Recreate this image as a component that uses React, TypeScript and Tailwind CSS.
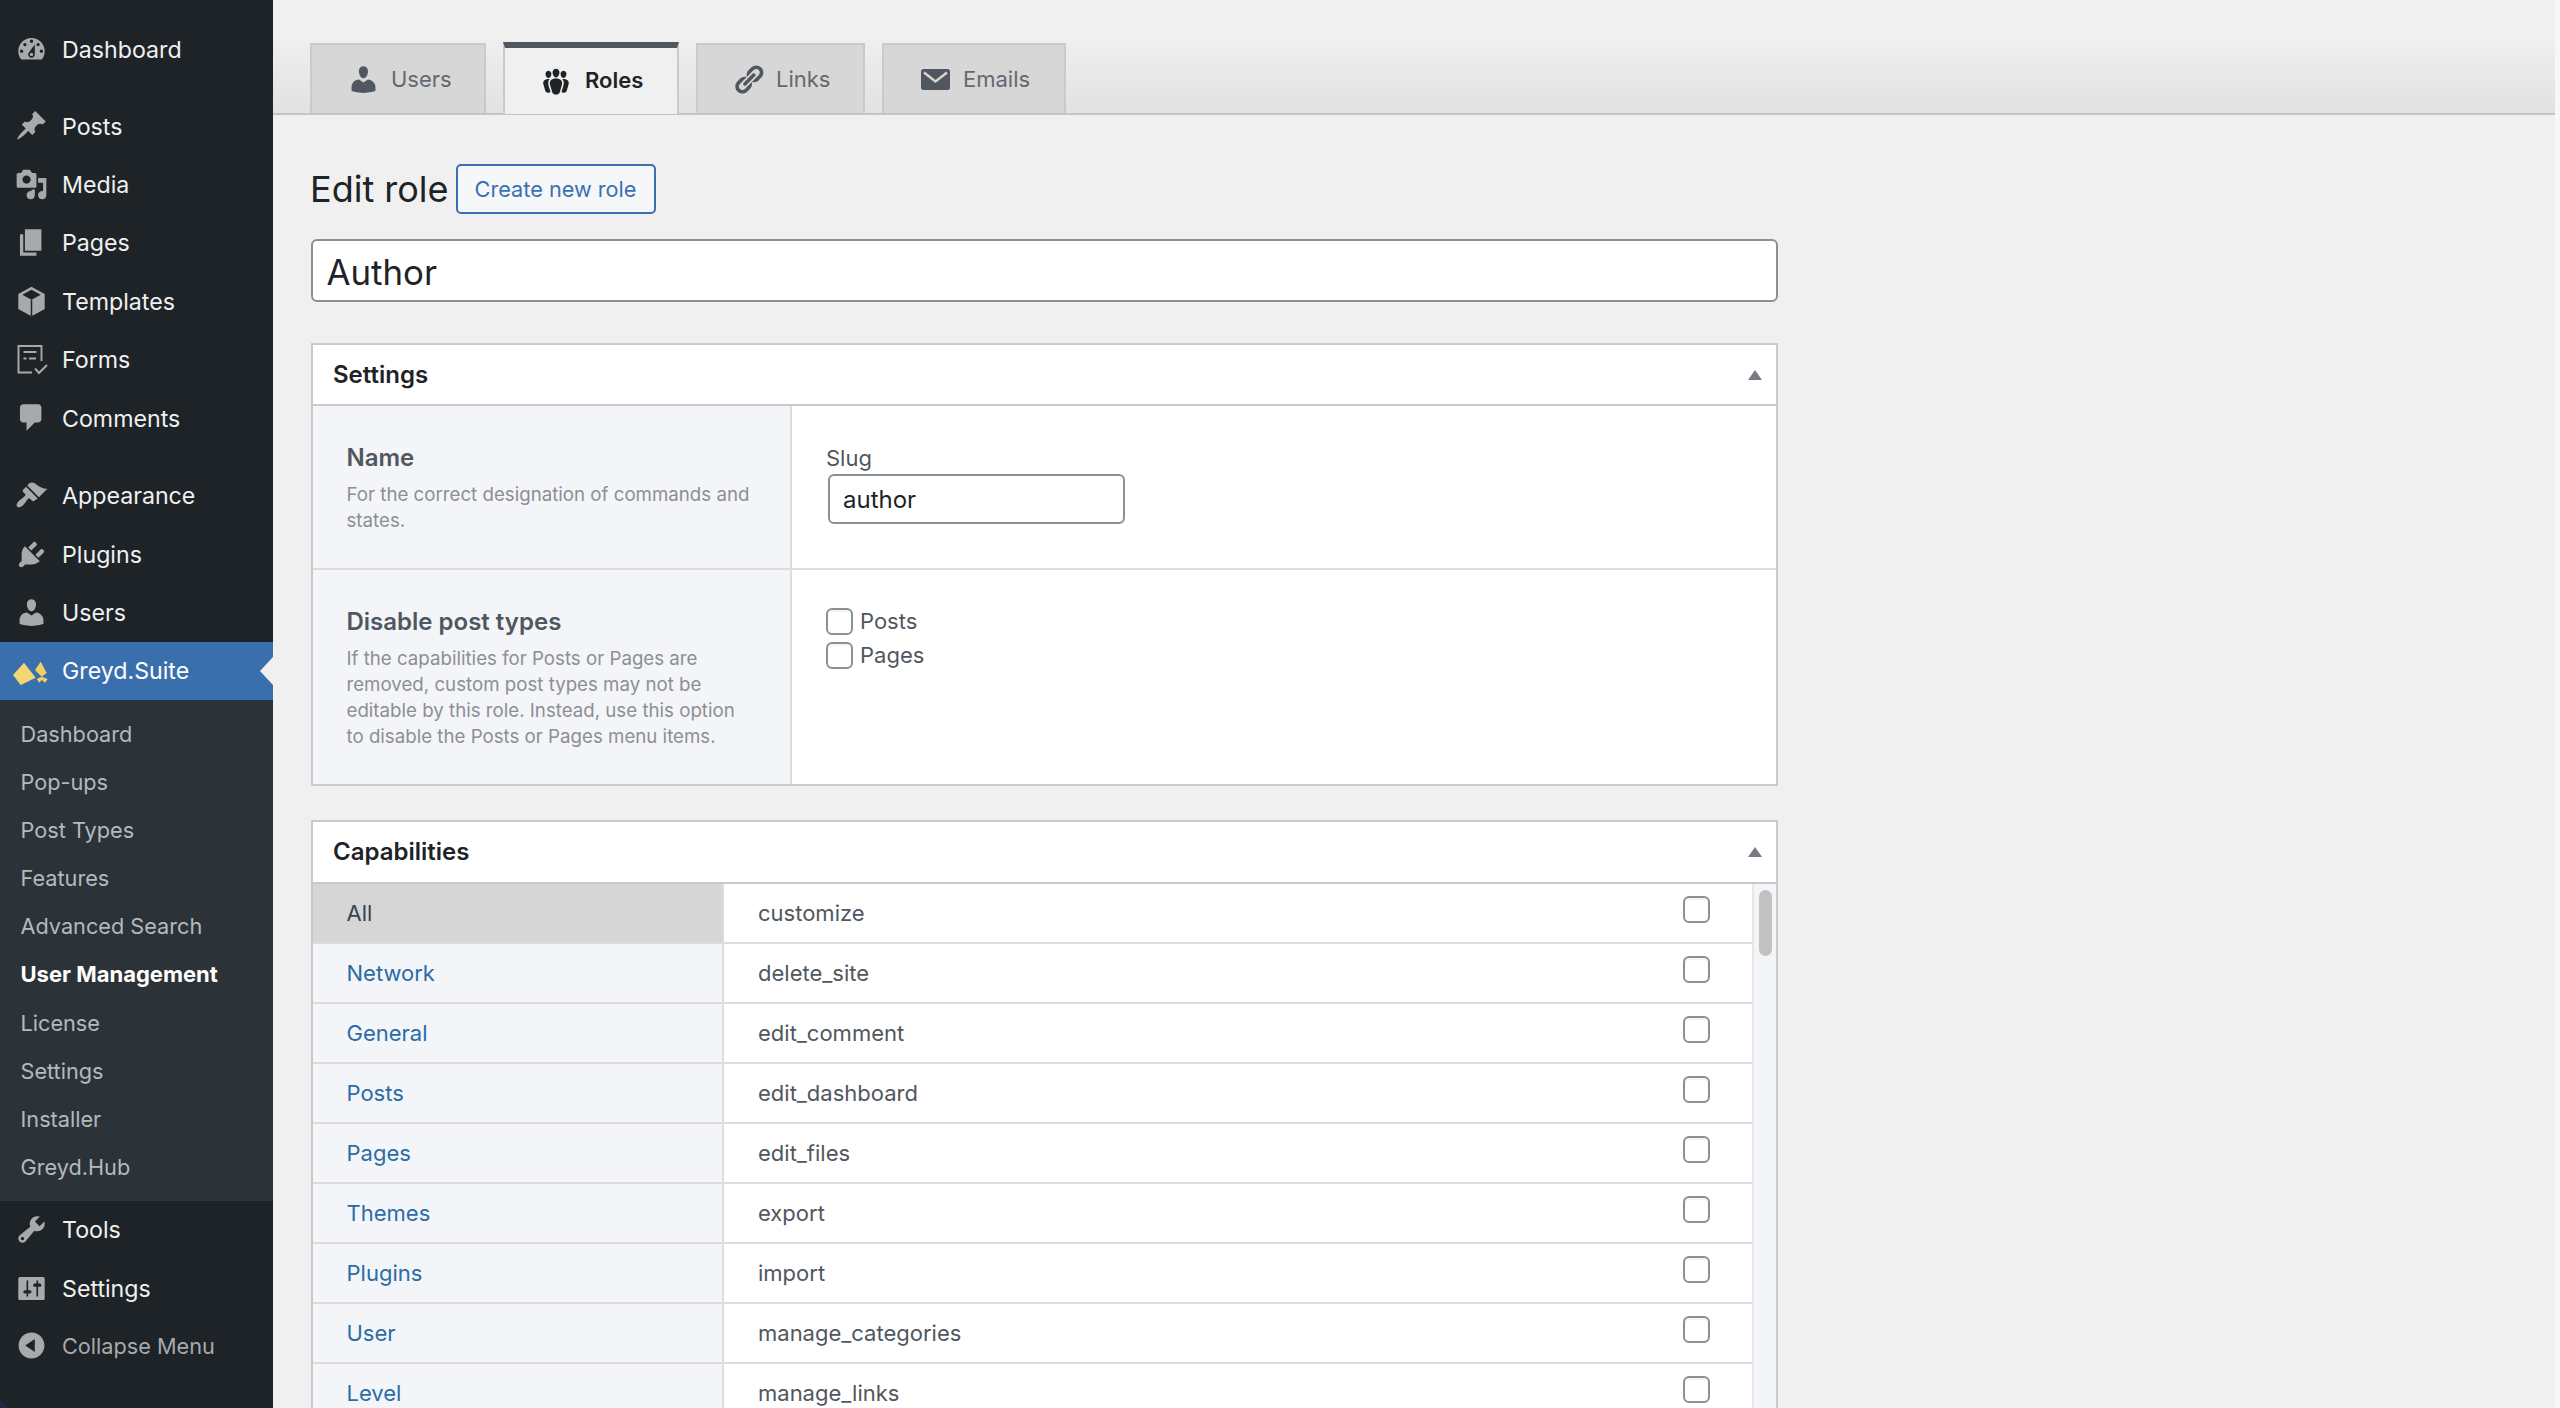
import React from "react";

const P = {
  dashboard: "M3.76 16h12.48c1.1-1.37 1.76-3.11 1.76-5 0-4.42-3.58-8-8-8s-8 3.58-8 8c0 1.89.66 3.63 1.76 5zM10 4c.55 0 1 .45 1 1s-.45 1-1 1-1-.45-1-1 .45-1 1-1zM6 6c.55 0 1 .45 1 1s-.45 1-1 1-1-.45-1-1 .45-1 1-1zm8 0c.55 0 1 .45 1 1s-.45 1-1 1-1-.45-1-1 .45-1 1-1zm-5.37 5.55L12 7v6c0 1.1-.9 2-2 2s-2-.9-2-2c0-.57.24-1.08.63-1.45zM4 10c.55 0 1 .45 1 1s-.45 1-1 1-1-.45-1-1 .45-1 1-1zm12 0c.55 0 1 .45 1 1s-.45 1-1 1-1-.45-1-1 .45-1 1-1zm-5 3c0-.55-.45-1-1-1s-1 .45-1 1 .45 1 1 1 1-.45 1-1z",
  post: "M10.44 3.02l1.82-1.82 6.36 6.35-1.83 1.82c-1.05-.68-2.48-.57-3.41.36l-.75.75c-.92.93-1.04 2.35-.35 3.41l-1.83 1.82-2.41-2.41-2.8 2.79c-.42.42-3.38 2.71-3.8 2.29s1.86-3.39 2.28-3.81l2.79-2.79L4.1 9.36l1.83-1.82c1.05.69 2.48.57 3.4-.36l.75-.75c.93-.92 1.05-2.35.36-3.41z",
  media: "M13 11V4c0-.55-.45-1-1-1h-1.67L9 1H5L3.67 3H2c-.55 0-1 .45-1 1v7c0 .55.45 1 1 1h10c.55 0 1-.45 1-1zM7 4.5c1.38 0 2.5 1.12 2.5 2.5S8.38 9.5 7 9.5 4.5 8.38 4.5 7 5.62 4.5 7 4.5zM14 6h5v10.5c0 1.38-1.12 2.5-2.5 2.5S14 17.88 14 16.5s1.12-2.5 2.5-2.5c.17 0 .34.02.5.05V9h-3V6zm-4 8.05V13h2v3.5c0 1.38-1.12 2.5-2.5 2.5S7 17.88 7 16.5 8.12 14 9.5 14c.17 0 .34.02.5.05z",
  page: "M6 15V2h10v13H6zm-1 1h8v2H3V5h2v11z",
  comment: "M5 2h9c1.1 0 2 .9 2 2v7c0 1.1-.9 2-2 2h-2l-5 5v-5H5c-1.1 0-2-.9-2-2V4c0-1.1.9-2 2-2z",
  appearance: "M14.48 11.06L7.41 3.99l1.5-1.5c.5-.56 2.3-.47 3.51.32 1.21.8 1.43 1.28 2.91 2.1 1.18.64 2.45 1.26 4.45.85zm-.71.71L6.7 4.7 4.93 6.47c-.39.39-.39 1.02 0 1.41l1.06 1.06c.39.39.39 1.03 0 1.42-.6.6-1.43 1.11-2.21 1.69-.35.26-.7.53-1.01.84-1.34 1.34-2.38 2.95-1.41 3.92.98.98 2.59-.06 3.94-1.4.31-.31.58-.66.85-1.02.57-.78 1.08-1.61 1.69-2.21.39-.39 1.02-.39 1.41 0l1.06 1.06c.39.39 1.02.39 1.41 0z",
  plugin: "M13.11 4.36L9.87 7.6 8 5.73l3.24-3.24c.35-.34 1.05-.2 1.56.32.52.51.66 1.21.31 1.55zm-8 1.77l.91-1.12 9.01 9.01-1.19.84c-.71.71-2.63 1.16-3.82 1.16H6.14L4.9 17.26c-.59.59-1.54.59-2.12 0-.59-.58-.59-1.53 0-2.12l1.24-1.24v-3.88c0-1.13.4-3.19 1.09-3.89zm7.26 3.97l3.24-3.24c.34-.35 1.04-.21 1.55.31.52.51.66 1.21.31 1.55l-3.24 3.25z",
  users: "M10 9.25c-2.27 0-2.73-3.44-2.73-3.44C7 4.02 7.82 2 9.97 2c2.16 0 2.98 2.02 2.71 3.81 0 0-.41 3.44-2.68 3.44zm0 2.57L12.72 10c2.39 0 4.52 2.33 4.52 4.53v2.49s-3.65 1.13-7.24 1.13c-3.65 0-7.24-1.13-7.24-1.13v-2.49c0-2.25 1.94-4.48 4.47-4.48z",
  tools: "M16.68 9.77c-1.34 1.34-3.3 1.67-4.95.99l-5.41 6.52c-.99.99-2.59.99-3.58 0s-.99-2.59 0-3.57l6.52-5.42c-.68-1.65-.35-3.61.99-4.95 1.28-1.28 3.12-1.62 4.72-1.06l-2.89 2.89 2.82 2.82 2.86-2.87c.53 1.58.18 3.39-1.08 4.65zM3.81 16.21c.4.39 1.04.39 1.43 0 .4-.4.4-1.04 0-1.43-.39-.4-1.03-.4-1.43 0-.39.39-.39 1.03 0 1.43z",
  settings: "M18 16V4c0-.55-.45-1-1-1H3c-.55 0-1 .45-1 1v12c0 .55.45 1 1 1h14c.55 0 1-.45 1-1zM8 11h1c.55 0 1 .45 1 1s-.45 1-1 1H8v1.5c0 .28-.22.5-.5.5s-.5-.22-.5-.5V13H6c-.55 0-1-.45-1-1s.45-1 1-1h1V5.5c0-.28.22-.5.5-.5s.5.22.5.5V11zm5-2h-1c-.55 0-1-.45-1-1s.45-1 1-1h1V5.5c0-.28.22-.5.5-.5s.5.22.5.5V7h1c.55 0 1 .45 1 1s-.45 1-1 1h-1v5.5c0 .28-.22.5-.5.5s-.5-.22-.5-.5V9z",
  collapse: "M10 2.16c4.33 0 7.84 3.51 7.84 7.84s-3.51 7.84-7.84 7.84S2.16 14.33 2.16 10 5.71 2.16 10 2.16zm2 11.72V6.12L6.18 9.97z",
  groups: "M8.03 4.46c-.29 1.28.55 3.46 1.97 3.46 1.41 0 2.25-2.18 1.96-3.46-.22-.98-1.08-1.63-1.96-1.63-.89 0-1.74.65-1.97 1.63zm-4.13.9c-.25 1.08.47 2.93 1.67 2.93s1.92-1.85 1.67-2.93c-.19-.83-.92-1.39-1.67-1.39s-1.48.56-1.67 1.39zm8.86 0c-.25 1.08.47 2.93 1.66 2.93 1.2 0 1.92-1.85 1.67-2.93-.19-.83-.92-1.39-1.67-1.39-.74 0-1.47.56-1.66 1.39zm-.59 11.43l1.25-4.3C14.2 10 12.71 8.47 10 8.47c-2.72 0-4.21 1.53-3.44 4.02l1.26 4.3C8.05 17.51 9 18 10 18c.98 0 1.94-.49 2.17-1.21zm-6.1-7.63c-.49.67-.96 1.83-.42 3.59l1.12 3.79c-.34.2-.77.31-1.2.31-.85 0-1.65-.41-1.85-1.03l-1.07-3.65c-.65-2.11.61-3.4 2.92-3.4.27 0 .54.02.79.06-.1.1-.2.22-.29.33zm8.35-.39c2.31 0 3.58 1.29 2.92 3.4l-1.07 3.65c-.2.62-1 1.03-1.85 1.03-.43 0-.86-.11-1.2-.31l1.11-3.77c.55-1.78.08-2.94-.42-3.61-.08-.11-.18-.23-.28-.33.25-.04.51-.06.79-.06z",
  links: "M17.74 2.76c1.68 1.69 1.68 4.41 0 6.1l-1.53 1.52c-1.12 1.12-2.7 1.47-4.14 1.09l2.62-2.61.76-.77.76-.76c.84-.84.84-2.2 0-3.04-.84-.85-2.2-.85-3.04 0l-.77.76-3.38 3.38c-.37-1.44-.02-3.02 1.1-4.14l1.52-1.53c1.69-1.68 4.42-1.68 6.1 0zM8.59 13.43l5.34-5.34c.42-.42.42-1.1 0-1.52-.44-.43-1.13-.39-1.53 0l-5.33 5.34c-.42.42-.42 1.1 0 1.52.44.43 1.13.39 1.52 0zm-.76 2.29l4.14-4.15c.38 1.44.03 3.02-1.09 4.14l-1.52 1.53c-1.69 1.68-4.41 1.68-6.1 0-1.68-1.68-1.68-4.42 0-6.1l1.53-1.52c1.12-1.12 2.7-1.47 4.14-1.1l-4.14 4.15c-.85.84-.85 2.2 0 3.05.84.84 2.2.84 3.04 0z",
};

function Dash({ d, className }: { d: string; className: string }) {
  return (
    <svg viewBox="0 0 20 20" className={className} fill="currentColor">
      <path d={d} />
    </svg>
  );
}

function CubeIcon() {
  return (
    <svg viewBox="0 0 20 20" className="h-[33px] w-[33px] shrink-0 text-[#a7aaad]">
      <path d="M10 1l8 4.5v9L10 19l-8-4.5v-9z" fill="currentColor" />
      <path d="M10 2.9l5.6 3L10 8.9l-5.6-3z" fill="#1d2327" />
      <path d="M10 9v10" stroke="#1d2327" strokeWidth="0.9" />
    </svg>
  );
}

function FormsIcon() {
  return (
    <svg viewBox="0 0 33 33" className="h-[33px] w-[33px] shrink-0 text-[#a7aaad]" fill="none" stroke="currentColor" strokeWidth="1.9">
      <path d="M26.5 18V3H3.5v26.5H17" />
      <path d="M8.5 9h13M8.5 15.5h3M14 15.5h7" />
      <path d="M20 25.5l4 4.5 8-8" />
    </svg>
  );
}

function GreydLogo() {
  return (
    <svg viewBox="13 660 36 26" className="-ml-[1.5px] mr-[-1.5px] h-[26px] w-[36px] shrink-0 translate-y-[2px]">
      <path d="M13 675L24 662.7 35.7 677.7 20.7 685z" fill="#f3d673" />
      <path d="M35 670L40.7 661.7 46.7 673 41.7 676.7z" fill="#f0cf66" />
      <path d="M36.7 679L41.7 676.7 47.7 679 45 682.7 41.7 680 39.3 682.7z" fill="#f0cf66" />
    </svg>
  );
}

function MenuItem({ icon, label }: { icon: React.ReactNode; label: string }) {
  return (
    <div className="flex h-[58.4px] items-center gap-[14.5px] pl-[14.5px] text-[23.2px] text-[#f0f0f1]">
      {icon}
      <span className="pt-[2px]">{label}</span>
    </div>
  );
}

const ic = "h-[33px] w-[33px] shrink-0 text-[#a7aaad]";

const sub = ["Dashboard", "Pop-ups", "Post Types", "Features", "Advanced Search", "User Management", "License", "Settings", "Installer", "Greyd.Hub"];

const caps: [string, string][] = [
  ["All", "customize"],
  ["Network", "delete_site"],
  ["General", "edit_comment"],
  ["Posts", "edit_dashboard"],
  ["Pages", "edit_files"],
  ["Themes", "export"],
  ["Plugins", "import"],
  ["User", "manage_categories"],
  ["Level", "manage_links"],
];

function Sidebar() {
  return (
    <div className="h-full w-[273px] shrink-0 bg-[#1c2b40]">
      <div className="flex h-full flex-col rounded-bl-[14px] bg-[#1d2327] pt-[20px]">
        <MenuItem icon={<Dash d={P.dashboard} className={ic} />} label="Dashboard" />
        <div className="h-[18.4px]" />
        <MenuItem icon={<Dash d={P.post} className={ic} />} label="Posts" />
        <MenuItem icon={<Dash d={P.media} className={ic} />} label="Media" />
        <MenuItem icon={<Dash d={P.page} className={ic} />} label="Pages" />
        <MenuItem icon={<CubeIcon />} label="Templates" />
        <MenuItem icon={<FormsIcon />} label="Forms" />
        <MenuItem icon={<Dash d={P.comment} className={ic} />} label="Comments" />
        <div className="h-[19.4px]" />
        <MenuItem icon={<Dash d={P.appearance} className={ic} />} label="Appearance" />
        <MenuItem icon={<Dash d={P.plugin} className={ic} />} label="Plugins" />
        <MenuItem icon={<Dash d={P.users} className={ic} />} label="Users" />
        <div className="relative flex h-[58px] items-center gap-[14.5px] bg-[#3a6fae] pl-[14.5px] text-[23.2px] text-white">
          <GreydLogo />
          <span className="pt-[2px]">Greyd.Suite</span>
          <span className="absolute right-0 top-[15px] h-0 w-0 border-y-[14px] border-r-[13px] border-y-transparent border-r-[#f0f0f1]" />
        </div>
        <div className="flex flex-col bg-[#2c3338] pb-[9px] pt-[10px]">
          {sub.map((s) => (
            <div
              key={s}
              className={
                s === "User Management"
                  ? "flex h-[48.2px] items-center pl-[20.5px] text-[22px] font-bold text-white"
                  : "flex h-[48.2px] items-center pl-[20.5px] text-[21.7px] text-[#b4b9be]"
              }
            >
              {s}
            </div>
          ))}
        </div>
        <MenuItem icon={<Dash d={P.tools} className={ic} />} label="Tools" />
        <MenuItem icon={<Dash d={P.settings} className={ic} />} label="Settings" />
        <div className="flex h-[56px] items-center gap-[14.5px] pl-[14.5px] text-[21.7px] text-[#a7aaad]">
          <Dash d={P.collapse} className={ic} />
          <span className="pt-[2px]">Collapse Menu</span>
        </div>
      </div>
    </div>
  );
}

function Tabs() {
  const tab = "flex h-[70px] items-center border-2 border-b-0 border-[#c9cacc] bg-[#d7d7d7] text-[22px] text-[#646970]";
  return (
    <div className="flex h-[115px] items-start gap-[17px] border-b-2 border-[#c3c4c7] bg-linear-to-b from-[#f0f0f1] from-30% to-[#e2e2e2] pl-[37px] pt-[43px]">
      <div className={`${tab} w-[176px] gap-[11px] pl-[35px]`}>
        <Dash d={P.users} className="h-[33px] w-[33px] shrink-0 text-[#50575e]" />
        <span>Users</span>
      </div>
      <div className="flex h-[72px] w-[176px] -translate-y-px items-center gap-[12px] border-x-2 border-t-[6px] border-x-[#c9cacc] border-t-[#50575e] bg-[#f0f0f1] pl-[34px] text-[22px] font-semibold text-[#1d2327]">
        <Dash d={P.groups} className="h-[34px] w-[34px] shrink-0 text-[#1d2327]" />
        <span className="pb-[2px]">Roles</span>
      </div>
      <div className={`${tab} w-[169px] gap-[11px] pl-[34px]`}>
        <Dash d={P.links} className="h-[33px] w-[33px] shrink-0 text-[#50575e]" />
        <span>Links</span>
      </div>
      <div className={`${tab} w-[184px] gap-[13px] pl-[37px]`}>
        <svg viewBox="0 0 29 21" className="h-[21px] w-[29px] shrink-0">
          <rect width="29" height="21" rx="2.5" fill="#50575e" />
          <path d="M3 3.5l11.5 9 11.5-9" fill="none" stroke="#d7d7d7" strokeWidth="2.4" />
        </svg>
        <span>Emails</span>
      </div>
    </div>
  );
}

function Triangle() {
  return (
    <svg viewBox="0 0 14 10" className="h-[10px] w-[14px] shrink-0">
      <polygon points="7,0 14,10 0,10" fill="#787c82" />
    </svg>
  );
}

function PanelHeader({ title, tall }: { title: string; tall?: boolean }) {
  return (
    <div
      className={
        tall
          ? "flex h-[62px] items-center justify-between border-b-2 border-[#c9cacc] bg-white pl-[20px] pr-[14px]"
          : "flex h-[61px] items-center justify-between border-b-2 border-[#c9cacc] bg-white pl-[20px] pr-[14px]"
      }
    >
      <span className="text-[24px] font-semibold text-[#1d2327]">{title}</span>
      <Triangle />
    </div>
  );
}

function Box({ small }: { small?: boolean }) {
  return (
    <input
      type="checkbox"
      readOnly
      className={
        small
          ? "m-0 h-[27px] w-[27px] shrink-0 appearance-none rounded-[6px] border-2 border-[#8c8f94] bg-white shadow-[inset_0_2px_2px_rgba(0,0,0,0.05)]"
          : "m-0 mb-[7px] h-[27px] w-[27px] shrink-0 appearance-none rounded-[6px] border-2 border-[#8c8f94] bg-white shadow-[inset_0_2px_2px_rgba(0,0,0,0.05)]"
      }
    />
  );
}

export default function App() {
  return (
    <div className="flex h-[1408px] w-[2560px] overflow-hidden bg-[#f7f7f7] font-['Inter',sans-serif]">
      <Sidebar />
      <div className="h-full w-[2282px] shrink-0 bg-[#f0f0f1]">
        <Tabs />
        <div className="w-[1505px] pl-[37px]">
          <div className="mt-[49px] flex h-[50px] items-center gap-[7px]">
            <span className="text-[36px] text-[#1d2327]">Edit role</span>
            <div className="flex h-[50px] w-[200px] items-center justify-center rounded-[5px] border-2 border-[#3a70b2] bg-[#f6f7f9] text-[21.7px] text-[#3a70b2]">
              Create new role
            </div>
          </div>
          <input
            readOnly
            value="Author"
            className="mt-[25px] ml-px block h-[63px] w-[1467px] rounded-[6px] border-2 border-[#8c8f94] bg-white pl-[13.5px] pt-[2px] text-[34.8px] text-[#1d2327] outline-none"
          />
          <div className="mt-[41px] ml-px w-[1467px] border-2 border-[#c9cacc] bg-white">
            <PanelHeader title="Settings" />
            <div className="flex h-[164px] border-b-2 border-[#dcdcde]">
              <div className="w-[479px] shrink-0 border-r-2 border-[#dcdcde] bg-[#f4f5f9] pl-[33.5px] pt-[37px]">
                <div className="text-[24px] font-semibold leading-[30px] text-[#50575e]">Name</div>
                <div className="mt-[9px] text-[18.7px] leading-[26px] text-[#8c8f94]">
                  For the correct designation of commands and
                  <br />
                  states.
                </div>
              </div>
              <div className="pl-[34px] pt-[38px]">
                <div className="text-[22px] leading-[28px] text-[#50575e]">Slug</div>
                <input
                  readOnly
                  value="author"
                  className="mt-[2px] ml-[2px] block h-[50px] w-[297px] rounded-[6px] border-2 border-[#8c8f94] bg-white pl-[13px] text-[24px] text-[#1d2327] outline-none"
                />
              </div>
            </div>
            <div className="flex h-[214px]">
              <div className="w-[479px] shrink-0 border-r-2 border-[#dcdcde] bg-[#f4f5f9] pl-[33.5px] pt-[37px]">
                <div className="text-[24px] font-semibold leading-[30px] text-[#50575e]">Disable post types</div>
                <div className="mt-[9px] text-[18.7px] leading-[26px] text-[#8c8f94]">
                  If the capabilities for Posts or Pages are
                  <br />
                  removed, custom post types may not be
                  <br />
                  editable by this role. Instead, use this option
                  <br />
                  to disable the Posts or Pages menu items.
                </div>
              </div>
              <div className="flex flex-col gap-[7px] pl-[34px] pt-[38px]">
                <label className="flex h-[27px] items-center gap-[7px] text-[22px] text-[#50575e]">
                  <Box small />
                  <span>Posts</span>
                </label>
                <label className="flex h-[27px] items-center gap-[7px] text-[22px] text-[#50575e]">
                  <Box small />
                  <span>Pages</span>
                </label>
              </div>
            </div>
          </div>
          <div className="mt-[34px] ml-px w-[1467px] border-2 border-[#c9cacc] bg-white">
            <PanelHeader title="Capabilities" tall />
            <div className="flex">
              <div className="w-[1439px] shrink-0">
                {caps.map(([group, cap], i) => (
                  <div key={cap} className="flex h-[60px] border-b-2 border-[#dcdcde] text-[22px]">
                    <div
                      className={
                        i === 0
                          ? "flex w-[411px] shrink-0 items-center border-r-2 border-[#dcdcde] bg-[#d6d6d6] pl-[33.5px] text-[#3c434a]"
                          : "flex w-[411px] shrink-0 items-center border-r-2 border-[#dcdcde] bg-[#f4f5f9] pl-[33.5px] text-[#2a6ca5]"
                      }
                    >
                      {group}
                    </div>
                    <div className="flex flex-1 items-center justify-between pl-[34px] pr-[42px] text-[#50575e]">
                      <span>{cap}</span>
                      <Box />
                    </div>
                  </div>
                ))}
              </div>
              <div className="flex-1 border-l-2 border-[#e6e7ea] bg-[#f4f5f9] pl-[5px] pt-[6px]">
                <div className="h-[66px] w-[13px] rounded-full bg-[#c1c1c1]" />
              </div>
            </div>
          </div>
        </div>
      </div>
    </div>
  );
}
